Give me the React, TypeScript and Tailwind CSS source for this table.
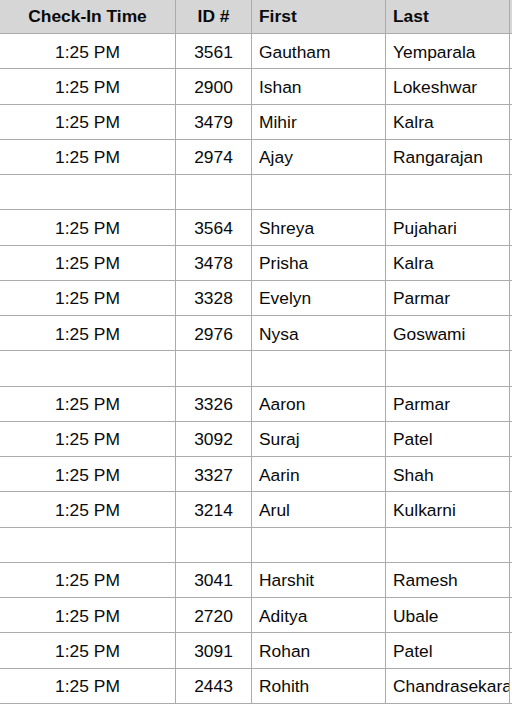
const rows: (string[] | null)[] = [
  ["3561", "Gautham", "Yemparala"],
  ["2900", "Ishan", "Lokeshwar"],
  ["3479", "Mihir", "Kalra"],
  ["2974", "Ajay", "Rangarajan"],
  null,
  ["3564", "Shreya", "Pujahari"],
  ["3478", "Prisha", "Kalra"],
  ["3328", "Evelyn", "Parmar"],
  ["2976", "Nysa", "Goswami"],
  null,
  ["3326", "Aaron", "Parmar"],
  ["3092", "Suraj", "Patel"],
  ["3327", "Aarin", "Shah"],
  ["3214", "Arul", "Kulkarni"],
  null,
  ["3041", "Harshit", "Ramesh"],
  ["2720", "Aditya", "Ubale"],
  ["3091", "Rohan", "Patel"],
  ["2443", "Rohith", "Chandrasekaran"],
];

const cell = "flex items-center overflow-hidden whitespace-nowrap border-b border-r border-[#ababab]";

export default function App() {
  return (
    <div className="h-[708px] w-[512px] overflow-hidden bg-white font-['Liberation_Sans',Arial,sans-serif] text-[17.4px] text-[#0a0a0a]">
      <div className="grid w-[640px] grid-cols-[176px_76px_134px_124px_130px]">
        <div className={`${cell} h-[34px] justify-center bg-[#d6d6d6] pb-px font-bold`}>Check-In Time</div>
        <div className={`${cell} h-[34px] justify-center bg-[#d6d6d6] pb-px font-bold`}>ID #</div>
        <div className={`${cell} h-[34px] bg-[#d6d6d6] pb-px pl-[7px] font-bold`}>First</div>
        <div className={`${cell} h-[34px] bg-[#d6d6d6] pb-px pl-[7px] font-bold`}>Last</div>
        <div className={`${cell} h-[34px] bg-[#d6d6d6]`} />
        {rows.map((r, i) => (
          <div key={i} className="contents">
            <div className={`${cell} h-[35.26px] justify-center pt-px`}>{r ? "1:25 PM" : ""}</div>
            <div className={`${cell} h-[35.26px] justify-center pt-px`}>{r ? r[0] : ""}</div>
            <div className={`${cell} h-[35.26px] pl-[7px] pt-px`}>{r ? r[1] : ""}</div>
            <div className={`${cell} h-[35.26px] pl-[7px] pt-px`}>{r ? r[2] : ""}</div>
            <div className={`${cell} h-[35.26px]`} />
          </div>
        ))}
      </div>
    </div>
  );
}
